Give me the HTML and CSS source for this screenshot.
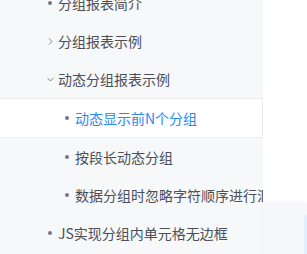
FILE: index.html
```html
<!DOCTYPE html>
<html lang="zh">
<head>
    <meta charset="UTF-8">
    <meta name="viewport" content="width=device-width, initial-scale=1.0">
    <title>分组报表</title>
    <link rel="stylesheet" href="styles.css">
</head>
<body>
    <aside class="sidebar">
        <ul class="nav">
            <li class="item"><span class="marker"><i class="dot"></i></span>分组报表简介</li>
            <li class="item"><span class="marker"><svg class="chev" width="7" height="7" viewBox="0 0 7 7"><path d="M2 0.5 L5 3.5 L2 6.5" fill="none" stroke="#7a8090" stroke-width="1"/></svg></span>分组报表示例</li>
            <li class="item"><span class="marker"><svg class="chev" width="7" height="7" viewBox="0 0 7 7"><path d="M0.5 2 L3.5 5 L6.5 2" fill="none" stroke="#7a8090" stroke-width="1"/></svg></span>动态分组报表示例</li>
            <li class="item sub active"><span class="marker"><i class="dot"></i></span>动态显示前N个分组</li>
            <li class="item sub"><span class="marker"><i class="dot"></i></span>按段长动态分组</li>
            <li class="item sub"><span class="marker"><i class="dot"></i></span>数据分组时忽略字符顺序进行汇总</li>
            <li class="item"><span class="marker"><i class="dot"></i></span>JS实现分组内单元格无边框</li>
        </ul>
    </aside>
    <main class="content">
        <div class="footer">
            <div class="tag"></div>
        </div>
    </main>
</body>
</html>
```

FILE: styles.css
```css
body {
    margin: 0;
    display: flex;
    height: 254px;
    overflow: hidden;
    font-family: "Noto Sans CJK SC", "Noto Sans", sans-serif;
    font-size: 14px;
    color: #4b4f58;
}
.sidebar {
    width: 263px;
    flex-shrink: 0;
    background-color: #f7f8fa;
    overflow: hidden;
}
.nav {
    list-style: none;
    margin: -16px 0 0;
    padding: 0;
}
.item {
    height: 38px;
    display: flex;
    align-items: center;
    padding-left: 42px;
    white-space: nowrap;
    overflow: hidden;
}
.item.sub {
    padding-left: 59px;
}
.marker {
    width: 16px;
    flex-shrink: 0;
    display: flex;
    align-items: center;
    justify-content: center;
}
.dot {
    width: 4px;
    height: 4px;
    border-radius: 50%;
    background-color: #737786;
}
.active {
    background-color: #fff;
    border-top: 1px solid #ebebed;
    border-bottom: 1px solid #ebebed;
    border-right: 1px solid #ebebed;
    color: #2a8af0;
}
.content {
    flex: 1;
    background-color: #fff;
    display: flex;
    flex-direction: column;
    justify-content: flex-end;
}
.footer {
    height: 50px;
    background-color: #f5f7fb;
    box-shadow: 0 -2px 4px rgba(0, 0, 0, 0.05);
    padding: 11px 0 0 41px;
    box-sizing: border-box;
}
.tag {
    height: 40px;
    background-color: #e4effd;
    border-radius: 3px 0 0 3px;
}
```
